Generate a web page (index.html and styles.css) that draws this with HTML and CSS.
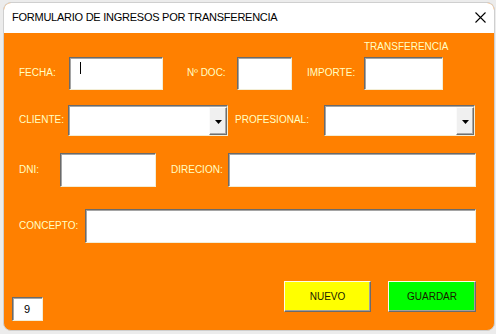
FILE: index.html
```html
<!DOCTYPE html>
<html lang="es">
<head>
<meta charset="utf-8">
<title>Formulario de ingresos por transferencia</title>
<link rel="stylesheet" href="styles.css">
</head>
<body>
<div class="window">
  <div class="titlebar">
    <span class="title">FORMULARIO DE INGRESOS POR TRANSFERENCIA</span>
    <svg class="close" width="11" height="11" viewBox="0 0 11 11" aria-hidden="true">
      <path d="M0.5 0.5 L10.5 10.5 M10.5 0.5 L0.5 10.5" stroke="#000" stroke-width="1.1" fill="none"/>
    </svg>
  </div>
  <div class="client">
    <div class="row row-1">
      <span class="lbl w-fecha">FECHA:</span>
      <div class="field f-fecha"><span class="caret"></span></div>
      <span class="lbl w-doc gap-24">Nº DOC:</span>
      <div class="field f-doc"></div>
      <span class="lbl w-importe gap-15">IMPORTE:</span>
      <div class="stack">
        <span class="cap">TRANSFERENCIA</span>
        <div class="field f-importe"></div>
      </div>
    </div>

    <div class="row row-2">
      <span class="lbl w-cliente">CLIENTE:</span>
      <div class="field combo c-cliente">
        <span class="drop"><svg width="7" height="4" viewBox="0 0 7 4"><polygon points="0,0 7,0 3.5,4" fill="#000"/></svg></span>
      </div>
      <span class="lbl w-prof gap-7">PROFESIONAL:</span>
      <div class="field combo c-prof">
        <span class="drop"><svg width="7" height="4" viewBox="0 0 7 4"><polygon points="0,0 7,0 3.5,4" fill="#000"/></svg></span>
      </div>
    </div>

    <div class="row row-3">
      <span class="lbl w-dni">DNI:</span>
      <div class="field f-dni"></div>
      <span class="lbl w-dir gap-15">DIRECION:</span>
      <div class="field f-dir"></div>
    </div>

    <div class="row row-4">
      <span class="lbl w-concepto">CONCEPTO:</span>
      <div class="field f-concepto"></div>
    </div>

    <div class="row-5">
      <div class="field counter">9</div>
      <div class="btn btn-nuevo">NUEVO</div>
      <div class="btn btn-guardar">GUARDAR</div>
    </div>
  </div>
</div>
</body>
</html>
```

FILE: styles.css
```css
html, body {
  margin: 0;
  padding: 0;
}

body {
  background: #ececec;
  font-family: "Liberation Sans", Arial, sans-serif;
  width: 496px;
  height: 334px;
  overflow: hidden;
}

.window {
  margin: 2px 0 0 3px;
  width: 492px;
  height: 329px;
  box-sizing: border-box;
  border: 1px solid #cfcfcf;
  border-radius: 8px;
  overflow: hidden;
  background: #ff8000;
  display: flex;
  flex-direction: column;
}

.titlebar {
  height: 30px;
  flex: 0 0 30px;
  box-sizing: border-box;
  background: #ffffff;
  display: flex;
  align-items: center;
  padding: 0 8px 2px 8px;
}

.title {
  font-size: 11px;
  letter-spacing: -0.25px;
  color: #000;
  white-space: nowrap;
}

.close {
  margin-left: auto;
  display: block;
}

.client {
  flex: 1;
  box-sizing: border-box;
  padding: 7px 0 0 8px;
  display: flex;
  flex-direction: column;
}

.row {
  display: flex;
  align-items: stretch;
  padding-left: 7px;
}

.row-1 { align-items: flex-end; }
.row-2 { margin-top: 15px; height: 31px; }
.row-3 { margin-top: 17px; height: 34px; }
.row-4 { margin-top: 22px; height: 34px; }

.lbl {
  display: flex;
  align-items: center;
  box-sizing: border-box;
  padding-bottom: 2px;
  font-size: 10px;
  color: #ffffc4;
  white-space: nowrap;
}

.row-1 .lbl { height: 33px; }

.w-fecha { width: 50px; }
.w-doc { width: 50px; }
.w-importe { width: 57px; }
.w-cliente { width: 49px; }
.w-prof { width: 89px; }
.w-dni { width: 41px; }
.w-dir { width: 57px; }
.w-concepto { width: 66px; }

.gap-24 { margin-left: 24px; }
.gap-15 { margin-left: 15px; }
.gap-7 { margin-left: 7px; }

.stack {
  display: flex;
  flex-direction: column;
}

.cap {
  font-size: 10px;
  line-height: 14px;
  margin-bottom: 3px;
  color: #ffffc4;
  white-space: nowrap;
}

.field {
  box-sizing: border-box;
  background: #ffffff;
  border-top: 1px solid #6a6a6a;
  border-left: 1px solid #6a6a6a;
  border-bottom: 1px solid #f3eed6;
  border-right: 1px solid #f3eed6;
  box-shadow: inset 1px 1px 0 #a5a5a5;
}

.f-fecha { width: 94px; height: 33px; }
.f-doc { width: 55px; height: 33px; }
.f-importe { width: 79px; height: 33px; }
.f-dni { width: 96px; }
.f-dir { width: 248px; }
.f-concepto { width: 391px; }

.caret {
  display: block;
  width: 1px;
  height: 12px;
  margin: 4px 0 0 10px;
  background: #000;
}

.combo {
  display: flex;
  justify-content: flex-end;
  padding: 1px 0 0 0;
}

.c-cliente { width: 160px; }
.c-prof { width: 151px; }

.drop {
  width: 18px;
  box-sizing: border-box;
  background: #f0f0f0;
  border-top: 1px solid #fbfbfb;
  border-left: 1px solid #fbfbfb;
  border-right: 1px solid #6e6e6e;
  border-bottom: 1px solid #6e6e6e;
  box-shadow: inset -1px -1px 0 #a8a8a8;
  display: flex;
  align-items: center;
  justify-content: center;
  padding-top: 1px;
}

.drop svg { display: block; }

.row-5 {
  margin-top: 38px;
  display: flex;
  align-items: flex-start;
}

.counter {
  width: 31px;
  height: 24px;
  margin-top: 16px;
  font-size: 11px;
  color: #000;
  display: flex;
  align-items: center;
  padding-left: 11px;
  padding-bottom: 1px;
}

.btn {
  width: 87px;
  height: 31px;
  box-sizing: border-box;
  border-top: 1px solid #fffbe8;
  border-left: 1px solid #fffbe8;
  border-right: 1px solid #6b6b6b;
  border-bottom: 1px solid #6b6b6b;
  box-shadow: inset -1px -1px 0 #a0a0a0;
  display: flex;
  align-items: center;
  justify-content: center;
  padding-bottom: 1px;
  font-size: 10px;
  color: #1a1a00;
}

.btn-nuevo {
  margin-left: 241px;
  background: #ffff00;
}

.btn-guardar {
  margin-left: 17px;
  width: 88px;
  background: #00ff00;
}
```
